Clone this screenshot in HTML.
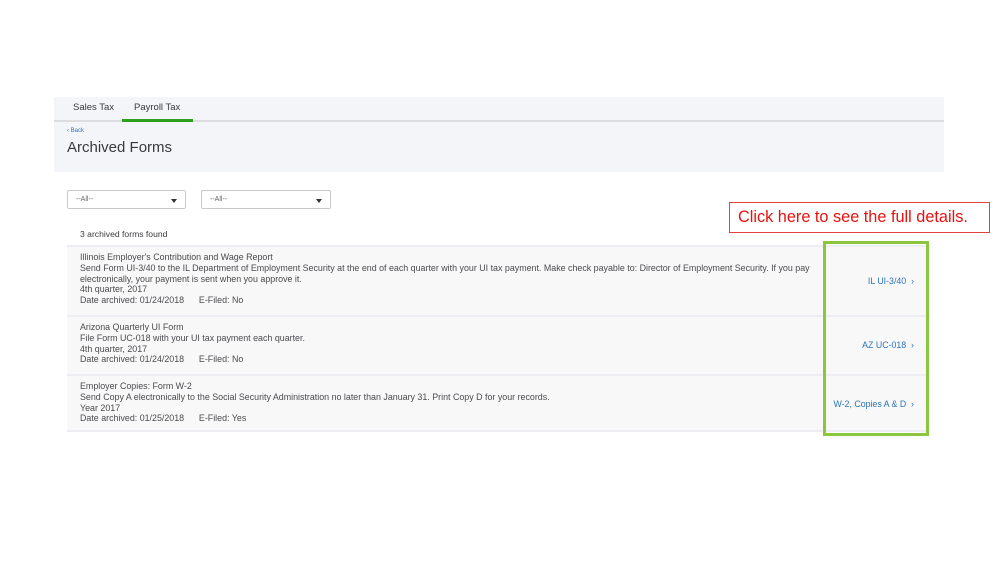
<!DOCTYPE html>
<html><head><style>
*{margin:0;padding:0;box-sizing:border-box}
body{width:999px;height:562px;background:#fff;font-family:"Liberation Sans",sans-serif;position:relative;overflow:hidden;color:#393a3d}
.abs{position:absolute}
.hdr{left:54px;top:97px;width:890px;height:75px;background:#f4f5f8}
.tab{top:102px;font-size:9.5px;color:#393a3d}
.sel{left:67px;width:119px;height:19px;border:1px solid #c8c9cc;border-radius:2px;background:#fff;top:190px;font-size:7px;color:#666;padding:5px 0 0 8px}
.sel:after{content:"";position:absolute;right:8px;top:8px;border-left:3px solid transparent;border-right:3px solid transparent;border-top:4px solid #333}
.row{left:67px;width:863px;background:#f8f8f9;border-top:2px solid #eceef1;font-size:8.9px;line-height:10.8px;padding:5px 0 0 13px;color:#4a4b4e}
.lnk{font-size:8.8px;color:#2d73b6;text-align:right;width:90px}
</style></head><body>
<div class="abs hdr"></div>
<div class="abs" style="left:54px;top:120px;width:890px;height:2px;background:#dcdde0"></div>
<div class="abs tab" style="left:73px">Sales Tax</div>
<div class="abs tab" style="left:134px">Payroll Tax</div>
<div class="abs" style="left:122px;top:119px;width:71px;height:3px;background:#2ca01c"></div>
<div class="abs" style="left:67px;top:128px;font-size:6px;color:#2d73b6">&#8249; Back</div>
<div class="abs" style="left:67px;top:139px;font-size:15px;color:#393a3d">Archived Forms</div>
<div class="abs sel">--All--</div>
<div class="abs sel" style="left:201px;width:130px">--All--</div>
<div class="abs" style="left:80px;top:229px;font-size:8.6px">3 archived forms found</div>
<div class="abs row" style="top:245px;height:70px">Illinois Employer's Contribution and Wage Report<br>Send Form UI-3/40 to the IL Department of Employment Security at the end of each quarter with your UI tax payment. Make check payable to: Director of Employment Security. If you pay<br>electronically, your payment is sent when you approve it.<br>4th quarter, 2017<br>Date archived: 01/24/2018 &nbsp; &nbsp; &nbsp;E-Filed: No</div>
<div class="abs row" style="top:315px;height:59px">Arizona Quarterly UI Form<br>File Form UC-018 with your UI tax payment each quarter.<br>4th quarter, 2017<br>Date archived: 01/24/2018 &nbsp; &nbsp; &nbsp;E-Filed: No</div>
<div class="abs row" style="top:374px;height:58px;border-bottom:2px solid #eceef1">Employer Copies: Form W-2<br>Send Copy A electronically to the Social Security Administration no later than January 31. Print Copy D for your records.<br>Year 2017<br>Date archived: 01/25/2018 &nbsp; &nbsp; &nbsp;E-Filed: Yes</div>
<div class="abs lnk" style="left:824px;top:276px">IL UI-3/40 &nbsp;›</div>
<div class="abs lnk" style="left:824px;top:340px">AZ UC-018 &nbsp;›</div>
<div class="abs lnk" style="left:824px;top:399px">W-2, Copies A &amp; D &nbsp;›</div>
<div class="abs" style="left:823px;top:241px;width:106px;height:195px;border:3px solid #8cc63f"></div>
<div class="abs" style="left:729px;top:202px;width:261px;height:31px;border:1px solid #e0413f;color:#e8110f;font-size:16.3px;padding:5px 0 0 8px;white-space:nowrap">Click here to see the full details.</div>
</body></html>
